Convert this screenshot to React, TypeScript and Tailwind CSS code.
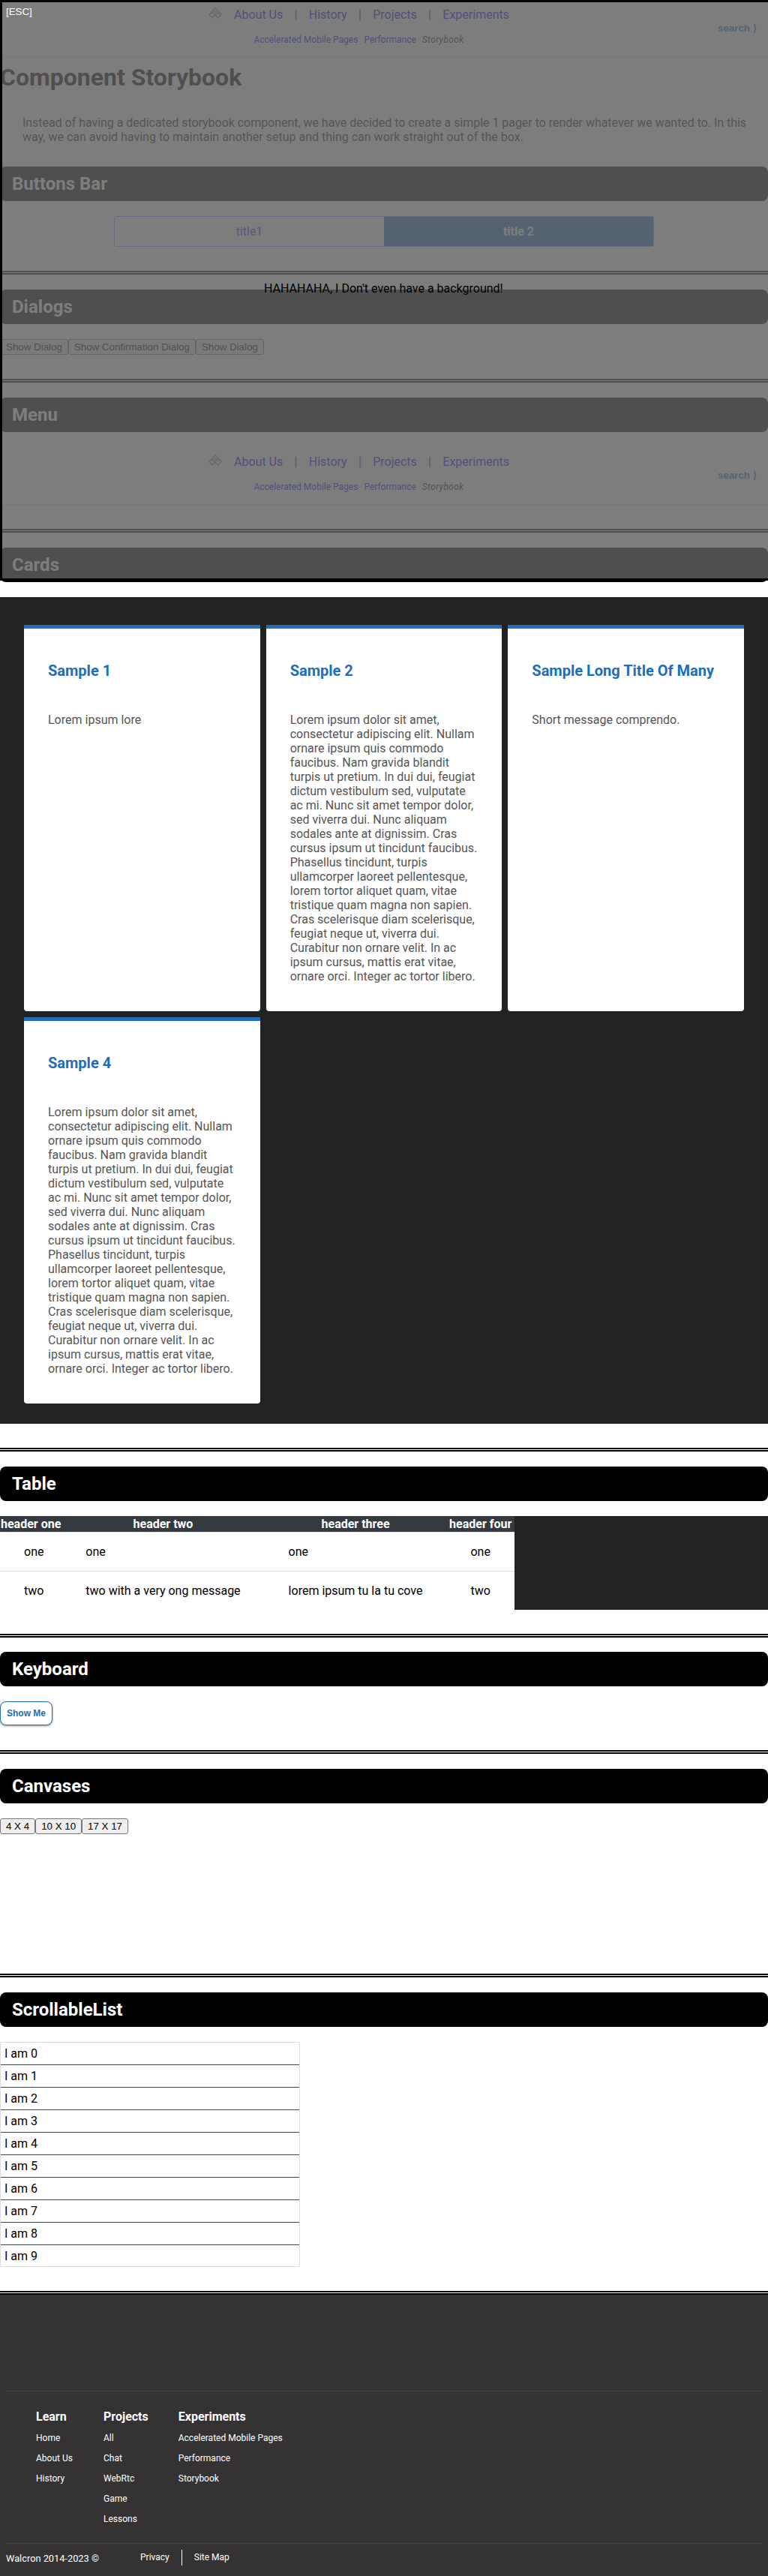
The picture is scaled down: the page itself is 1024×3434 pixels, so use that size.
import type { ReactNode } from "react";

const LOREM =
  "Lorem ipsum dolor sit amet, consectetur adipiscing elit. Nullam ornare ipsum quis commodo faucibus. Nam gravida blandit turpis ut pretium. In dui dui, feugiat dictum vestibulum sed, vulputate ac mi. Nunc sit amet tempor dolor, sed viverra dui. Nunc aliquam sodales ante at dignissim. Cras cursus ipsum ut tincidunt faucibus. Phasellus tincidunt, turpis ullamcorper laoreet pellentesque, lorem tortor aliquet quam, vitae tristique quam magna non sapien. Cras scelerisque diam scelerisque, feugiat neque ut, viverra dui. Curabitur non ornare velit. In ac ipsum cursus, mattis erat vitae, ornare orci. Integer ac tortor libero.";

const CARDS = [
  { title: "Sample 1", text: "Lorem ipsum lore" },
  { title: "Sample 2", text: LOREM },
  { title: "Sample Long Title Of Many", text: "Short message comprendo." },
  { title: "Sample 4", text: LOREM },
];

const FOOTER = [
  { title: "Learn", links: ["Home", "About Us", "History"] },
  { title: "Projects", links: ["All", "Chat", "WebRtc", "Game", "Lessons"] },
  { title: "Experiments", links: ["Accelerated Mobile Pages", "Performance", "Storybook"] },
];

function Logo() {
  return (
    <svg className="mr-4 h-[15px] w-[18px]" viewBox="0 0 18 15" fill="none">
      <path d="M9 .7 1 9.2l4.2 4.6L9 9.6l3.8 4.2L17 9.2Z" stroke="#1f8fe8" strokeWidth="1.2" />
      <path d="M3.5 8.2 6 5.8l1.6-.9L9 4l1.8 1.4 3.4.6 1.6 2.4-1.8-.6-.8 1.2-1.4-1.4-1.2 1.4-1.4-1.3L7.4 9 6 7.6Z" fill="#f0803080" stroke="#f07820" strokeWidth="1" />
    </svg>
  );
}

function Menu() {
  const items = ["About Us", "History", "Projects", "Experiments"];
  return (
    <header className="flex h-[77px] border-b border-[#dedede]">
      <div className="w-[957px] pt-[10px]">
        <nav className="flex h-[19px] justify-center text-[#0000ee]">
          <Logo />
          {items.map((item, i) => (
            <span key={item} className="flex">
              {i > 0 && <span className="w-[34.5px] text-center text-[#222]">|</span>}
              <a>{item}</a>
            </span>
          ))}
        </nav>
        <nav className="mt-[17px] flex h-[14px] justify-center gap-2 text-[12px] leading-[14px] text-[#0000ee]">
          <a>Accelerated Mobile Pages</a>
          <a>Performance</a>
          <em className="tracking-[0.03em] text-[#111]">Storybook</em>
        </nav>
      </div>
      <button className="mt-[30px] h-[15px] font-['Liberation_Sans',sans-serif] text-[13.333px] leading-[15px] font-bold whitespace-nowrap text-[#216dba]">
        search ⟩
      </button>
    </header>
  );
}

function Section({ title, children, className }: { title: string; children: ReactNode; className: string }) {
  return (
    <section className={`flex flex-col border-b-[5px] border-double border-black pb-8 ${className}`}>
      <h2 className="mb-5 h-[46px] shrink-0 rounded-lg bg-black px-4 py-[9px] text-2xl leading-7 font-bold text-white">{title}</h2>
      {children}
    </section>
  );
}

function NativeButtons({ labels }: { labels: string[] }) {
  return (
    <div className="flex">
      {labels.map((l, i) => (
        <button
          key={i}
          className="h-[21px] rounded-[3px] border border-[#767676] bg-[#efefef] px-[7px] font-['Liberation_Sans',sans-serif] text-[13.333px] leading-[19px] text-black"
        >
          {l}
        </button>
      ))}
    </div>
  );
}

function Overlay() {
  return (
    <div className="absolute top-0 left-0 h-[774px] w-[1030px] border-[3px] border-black bg-[rgba(96,96,96,0.82)]">
      <button className="absolute top-[5px] left-[5px] font-['Liberation_Sans',sans-serif] text-[13.333px] leading-[15px] text-white">
        [ESC]
      </button>
      <p className="absolute top-[372px] left-[349px] whitespace-nowrap text-black">HAHAHAHA, I Don't even have a background!</p>
    </div>
  );
}

export default function App() {
  return (
    <div className="relative h-[3434px] w-[1024px] overflow-hidden bg-white font-['Roboto',sans-serif] text-[16px] leading-[19px] text-black">
      <Menu />
      <h1 className="mt-2 h-[37px] text-[32px] leading-[37px] font-bold">Component Storybook</h1>
      <p className="mt-[32px] mb-[30px] h-[38px] px-[30px] text-[#222]">
        <span className="block tracking-[-0.035px] whitespace-nowrap">
          Instead of having a dedicated storybook component, we have decided to create a simple 1 pager to render whatever we wanted to. In this
        </span>{" "}
        way, we can avoid having to maintain another setup and thing can work straight out of the box.
      </p>

      <main className="flex flex-col gap-5">
        <Section title="Buttons Bar" className="h-[144px]">
          <div className="mx-auto grid h-[41px] w-[720px] grid-cols-2 rounded-[3px] border border-[#7fa0ff] text-center leading-[39px]">
            <a className="text-[#3030ee]">title1</a>
            <a className="bg-[#216dba] font-bold text-white">title 2</a>
          </div>
        </Section>

        <Section title="Dialogs" className="h-[124px]">
          <NativeButtons labels={["Show Dialog", "Show Confirmation Dialog", "Show Dialog"]} />
        </Section>

        <Section title="Menu" className="h-[180px]">
          <Menu />
        </Section>

        <Section title="Cards" className="h-[1205px]">
          <div className="grid h-[1102px] shrink-0 grid-cols-3 content-start gap-2 bg-[#222] px-8 pt-[37px]">
            {CARDS.map((c) => (
              <article key={c.title} className="h-[515px] rounded-b border-t-[5px] border-[#216dba] bg-white px-8">
                <h3 className="mt-[44px] text-xl leading-6 font-bold text-[#216dba]">{c.title}</h3>
                <p className="mt-11 text-[#555]">{c.text}</p>
              </article>
            ))}
          </div>
        </Section>

        <Section title="Table" className="-mb-px h-[228px]">
          <div className="flex h-[125px] bg-[#222]">
            <table className="h-[125px] border-collapse bg-white whitespace-nowrap">
              <thead>
                <tr className="bg-[#343a40] text-white">
                  {["header one", "header two", "header three", "header four"].map((h) => (
                    <th key={h} className="p-px text-center font-bold">{h}</th>
                  ))}
                </tr>
              </thead>
              <tbody>
                {[
                  ["one", "one", "one", "one"],
                  ["two", "two with a very ong message", "lorem ipsum tu la tu cove", "two"],
                ].map((row, i) => (
                  <tr key={i} className="border-t border-[#dee2e6]">
                    {row.map((cell, j) => (
                      <td key={j} className="px-8 py-4 first:pr-0">{cell}</td>
                    ))}
                  </tr>
                ))}
              </tbody>
            </table>
          </div>
        </Section>

        <Section title="Keyboard" className="h-[136px]">
          <button className="h-8 w-[70px] shrink-0 rounded-lg border border-[#216dba] bg-white font-['Liberation_Sans',sans-serif] text-xs font-bold text-[#216dba] shadow-[0_1px_3px_rgba(0,0,0,0.45)]">
            Show Me
          </button>
        </Section>

        <Section title="Canvases" className="h-[278px]">
          <NativeButtons labels={["4 X 4", "10 X 10", "17 X 17"]} />
        </Section>

        <Section title="ScrollableList" className="h-[403px]">
          <ul className="h-[300px] w-[400px] shrink-0 overflow-hidden border border-[#ddd]">
            {Array.from({ length: 10 }, (_, i) => (
              <li key={i} className="h-[30px] border-b border-[#444] p-[5px]">I am {i}</li>
            ))}
          </ul>
        </Section>
      </main>

      <footer className="h-[375px] bg-[#353233] px-2 pt-[128px] text-white">
        <div className="flex h-[203px] gap-10 border-t border-[#444] px-10 pt-6">
          {FOOTER.map((col) => (
            <div key={col.title} className="min-w-[50px]">
              <h4 className="font-bold">{col.title}</h4>
              <ul className="mt-3 text-[12px] leading-[14px]">
                {col.links.map((l) => (
                  <li key={l} className="mb-[13px]">{l}</li>
                ))}
              </ul>
            </div>
          ))}
        </div>
        <div className="flex border-t border-[#444] pt-2 text-[12px] leading-[19px]">
          <span className="w-[163px] pt-0.5 text-[12.8px]">Walcron 2014-2023 ©</span>
          <a className="border-r border-white px-4 pt-0.5 leading-[17px]">Privacy</a>
          <a className="px-4 pt-0.5 leading-[17px]">Site Map</a>
        </div>
      </footer>

      <Overlay />
    </div>
  );
}
